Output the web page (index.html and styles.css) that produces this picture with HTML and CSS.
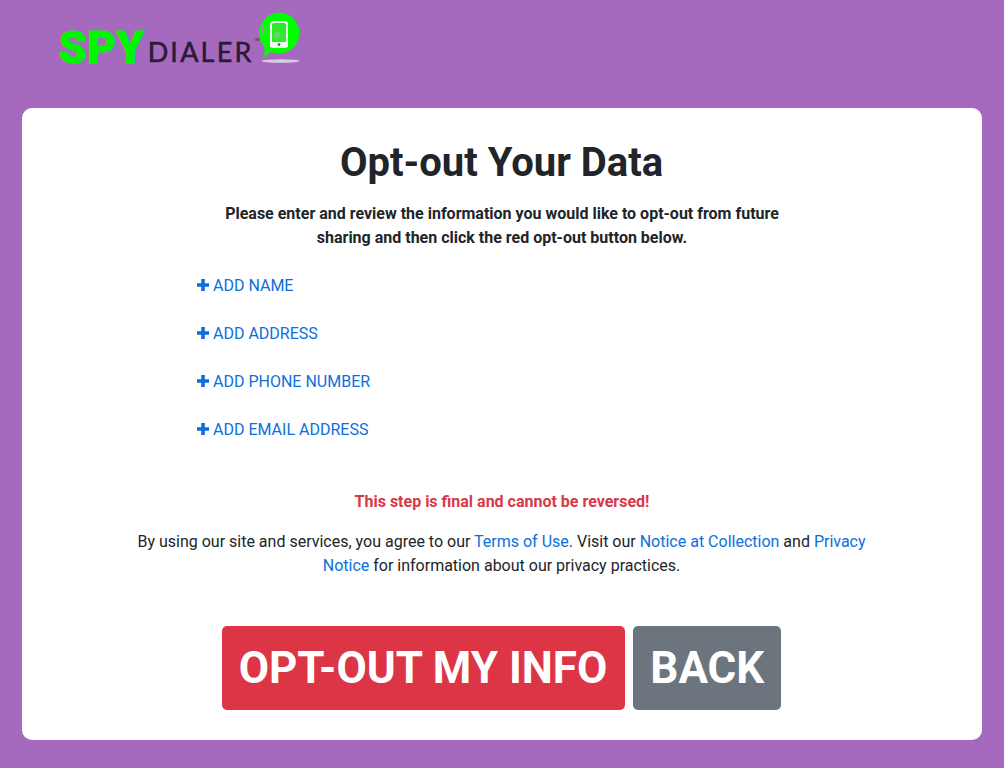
FILE: index.html
```html
<!DOCTYPE html>
<html lang="en">
<head>
    <meta charset="UTF-8">
    <title>Opt-out Your Data</title>
    <link rel="stylesheet" href="styles.css">
</head>
<body>
    <div class="header">
        <div class="logo">
            <span class="logo-spy">SPY</span>
            <span class="logo-dialer">DIALER</span>
            <span class="logo-tm">TM</span>
            <svg class="logo-icon" width="46" height="54" viewBox="0 0 46 54">
                <ellipse cx="24.500" cy="51" rx="19" ry="1.800" fill="#d9cbe3"/>
                <path d="M23 2.500a20.500 20.500 0 1 1-8.500 39.200Q11 46 7 48q2.500-5 1.200-11.500A20.500 20.500 0 0 1 23 2.500z" fill="#0f0"/>
                <rect x="15" y="12" width="16" height="25" rx="2.500" fill="#2ee82e" stroke="#e8ffe8" stroke-width="2"/>
                <rect x="14" y="32" width="18" height="5" fill="#e8ffe8"/>
                <circle cx="21" cy="25" r="3.500" fill="#5fd85f"/>
                <circle cx="23" cy="34.500" r="1.300" fill="#2b6b2b"/>
                <path d="M10.500 15a9 9 0 0 0 0 9M8 13a12 12 0 0 0 0 12.500" fill="none" stroke="#8fa0a0" stroke-width="1.200"/>
            </svg>
        </div>
    </div>
    <div class="card">
        <h1>Opt-out Your Data</h1>
        <p class="intro">Please enter and review the information you would like to opt-out from future sharing and then click the red opt-out button below.</p>
        <div class="add-list">
            <a class="add-link" href="#"><svg class="plus" width="12" height="12" viewBox="0 0 12 12"><path d="M4.200 0h3.600v4.200H12v3.600H7.800V12H4.200V7.800H0V4.200h4.200z"/></svg>ADD NAME</a>
            <a class="add-link" href="#"><svg class="plus" width="12" height="12" viewBox="0 0 12 12"><path d="M4.200 0h3.600v4.200H12v3.600H7.800V12H4.200V7.800H0V4.200h4.200z"/></svg>ADD ADDRESS</a>
            <a class="add-link" href="#"><svg class="plus" width="12" height="12" viewBox="0 0 12 12"><path d="M4.200 0h3.600v4.200H12v3.600H7.800V12H4.200V7.800H0V4.200h4.200z"/></svg>ADD PHONE NUMBER</a>
            <a class="add-link" href="#"><svg class="plus" width="12" height="12" viewBox="0 0 12 12"><path d="M4.200 0h3.600v4.200H12v3.600H7.800V12H4.200V7.800H0V4.200h4.200z"/></svg>ADD EMAIL ADDRESS</a>
        </div>
        <p class="warning">This step is final and cannot be reversed!</p>
        <p class="terms">By using our site and services, you agree to our <a href="#">Terms of Use</a>. Visit our <a href="#">Notice at Collection</a> and <a href="#">Privacy Notice</a> for information about our privacy practices.</p>
        <div class="buttons">
            <a class="btn btn-red" href="#">OPT-OUT MY INFO</a>
            <a class="btn btn-gray" href="#">BACK</a>
        </div>
    </div>
</body>
</html>
```

FILE: styles.css
```css
body {
    margin: 0;
    background-color: #a569bd;
    font-family: Roboto, "Liberation Sans", sans-serif;
    font-size: 16px;
    line-height: 24px;
    color: #212529;
}

a {
    color: #0b6fdc;
    text-decoration: none;
}

.header {
    height: 108px;
    padding-left: 59px;
    box-sizing: border-box;
}

.logo {
    display: flex;
    align-items: flex-end;
    height: 64px;
}

.logo-spy {
    font-weight: 900;
    font-size: 44px;
    line-height: 44px;
    letter-spacing: 0.6px;
    color: #00f500;
    margin-bottom: -6px;
    -webkit-text-stroke: 1px #00f500;
}

.logo-dialer {
    font-family: Lato, sans-serif;
    font-size: 27px;
    line-height: 36px;
    letter-spacing: 2.2px;
    color: #2a1a35;
    margin-left: 3px;
    margin-bottom: -6px;
    -webkit-text-stroke: 0.5px #2a1a35;
}

.logo-tm {
    width: 2px;
    font-size: 4px;
    line-height: 4px;
    color: #3a2a4a;
    margin-bottom: 22px;
}

.card {
    background-color: #fff;
    border-radius: 10px;
    margin: 0 22px;
    height: 632px;
    box-sizing: border-box;
    padding-top: 31px;
    text-align: center;
}

h1 {
    margin: 0;
    padding-right: 1px;
    font-size: 40px;
    line-height: 48px;
    font-weight: bold;
}

.intro {
    width: 570px;
    margin: 15px auto 0;
    font-weight: bold;
}

.add-list {
    display: flex;
    flex-direction: column;
    align-items: flex-start;
    gap: 24px;
    margin: 24px 0 0 175px;
}

.add-link {
    display: flex;
    align-items: center;
    gap: 4px;
}

.plus {
    fill: #0b6fdc;
    margin-top: -3px;
}

.warning {
    margin: 48px 0 0;
    font-weight: bold;
    color: #d63a48;
}

.terms {
    width: 760px;
    margin: 16px auto 0;
    padding-right: 1px;
    box-sizing: border-box;
}

.buttons {
    display: flex;
    justify-content: center;
    gap: 8px;
    margin-top: 48px;
    padding-right: 1px;
}

.btn {
    height: 84px;
    line-height: 84px;
    padding: 0 17px;
    border-radius: 5px;
    color: #fff;
    font-size: 44px;
    font-weight: bold;
}

.btn-red {
    background-color: #dc3545;
    padding-right: 18px;
}

.btn-gray {
    background-color: #6c757d;
}
```
